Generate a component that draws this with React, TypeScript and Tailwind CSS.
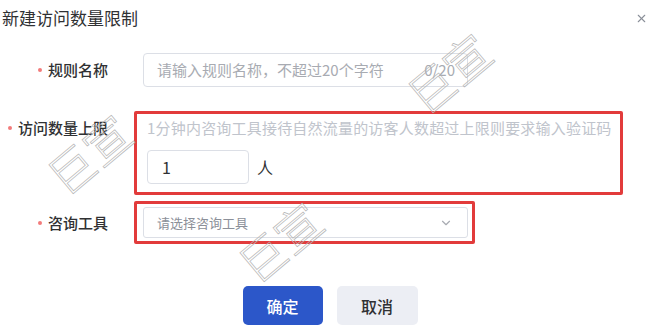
import { ChevronDown, X } from "lucide-react";

function Label({ text }: { text: string }) {
    return (
        <div className="flex w-[134px] shrink-0 items-center justify-end pr-[26px]">
            <span className="mr-[6px] h-[4px] w-[4px] rounded-full bg-[#f27b7b]" />
            <span className="text-[15px] font-medium leading-5 text-[#303133]">{text}</span>
        </div>
    );
}

function Watermark({ className }: { className: string }) {
    return (
        <span
            className={`pointer-events-none absolute select-none text-[46px] font-light leading-none text-transparent [-webkit-text-stroke:0.7px_#b5b5b5] ${className}`}
        >
            巨宣
        </span>
    );
}

export default function App() {
    return (
        <div className="relative h-[334px] w-[660px] overflow-hidden bg-white font-['Noto_Sans_CJK_SC','Noto_Sans',sans-serif]">
            <div className="flex items-center justify-between pl-[2px] pr-[12px] pt-[7px]">
                <h1 className="text-[17px] leading-[22px] text-[#303133]">新建访问数量限制</h1>
                <X className="h-[13px] w-[13px] text-[#8a8f99]" strokeWidth={2} />
            </div>

            <div className="mt-[24px] flex items-center">
                <Label text="规则名称" />
                <div className="ml-[9px] flex h-[34px] w-[325px] items-center justify-between rounded-[4px] border border-[#dcdfe6] pl-[13px] pr-[12px]">
                    <span className="text-[15px] text-[#a8abb2]">请输入规则名称，不超过20个字符</span>
                    <span className="text-[15px] text-[#a8abb2]">0/20</span>
                </div>
            </div>

            <div className="mt-[24px] flex items-start">
                <div className="pt-[7px]">
                    <Label text="访问数量上限" />
                </div>
                <div className="w-[489px] rounded-[2px] border-[3px] border-[#e23b3b] pb-[8px] pl-[10px] pt-[4px]">
                    <p className="whitespace-nowrap text-[15px] leading-5 tracking-[0.2px] text-[#c0c4cc]">
                        1分钟内咨询工具接待自然流量的访客人数超过上限则要求输入验证码
                    </p>
                    <div className="mt-[12px] flex items-center">
                        <div className="flex h-[34px] w-[102px] items-center rounded-[4px] border border-[#dcdfe6] pl-[14px] text-[16px] text-[#303133]">
                            1
                        </div>
                        <span className="ml-[8px] text-[16px] text-[#303133]">人</span>
                    </div>
                </div>
            </div>

            <div className="mt-[6px] flex items-center">
                <Label text="咨询工具" />
                <div className="w-[341px] rounded-[2px] border-[3px] border-[#e23b3b] py-[3px] pl-[6px] pr-[4px]">
                    <div className="flex h-[31px] items-center justify-between rounded-[3px] border border-[#dcdfe6] pl-[13px] pr-[14px]">
                        <span className="text-[13px] text-[#8c9099]">请选择咨询工具</span>
                        <ChevronDown className="h-[14px] w-[14px] text-[#a8abb2]" strokeWidth={2} />
                    </div>
                </div>
            </div>

            <div className="mt-[42px] flex justify-center gap-[14px]">
                <button className="h-[39px] w-[80px] rounded-[5px] bg-[#2c57c9] text-[16px] font-medium text-white">
                    确定
                </button>
                <button className="h-[39px] w-[81px] rounded-[5px] bg-[#eceef4] text-[16px] font-medium text-[#303133]">
                    取消
                </button>
            </div>

            <Watermark className="left-[42px] top-[130px] -rotate-[40deg]" />
            <Watermark className="left-[402px] top-[49px] -rotate-[40deg]" />
            <Watermark className="left-[233px] top-[218px] -rotate-[40deg]" />
        </div>
    );
}
